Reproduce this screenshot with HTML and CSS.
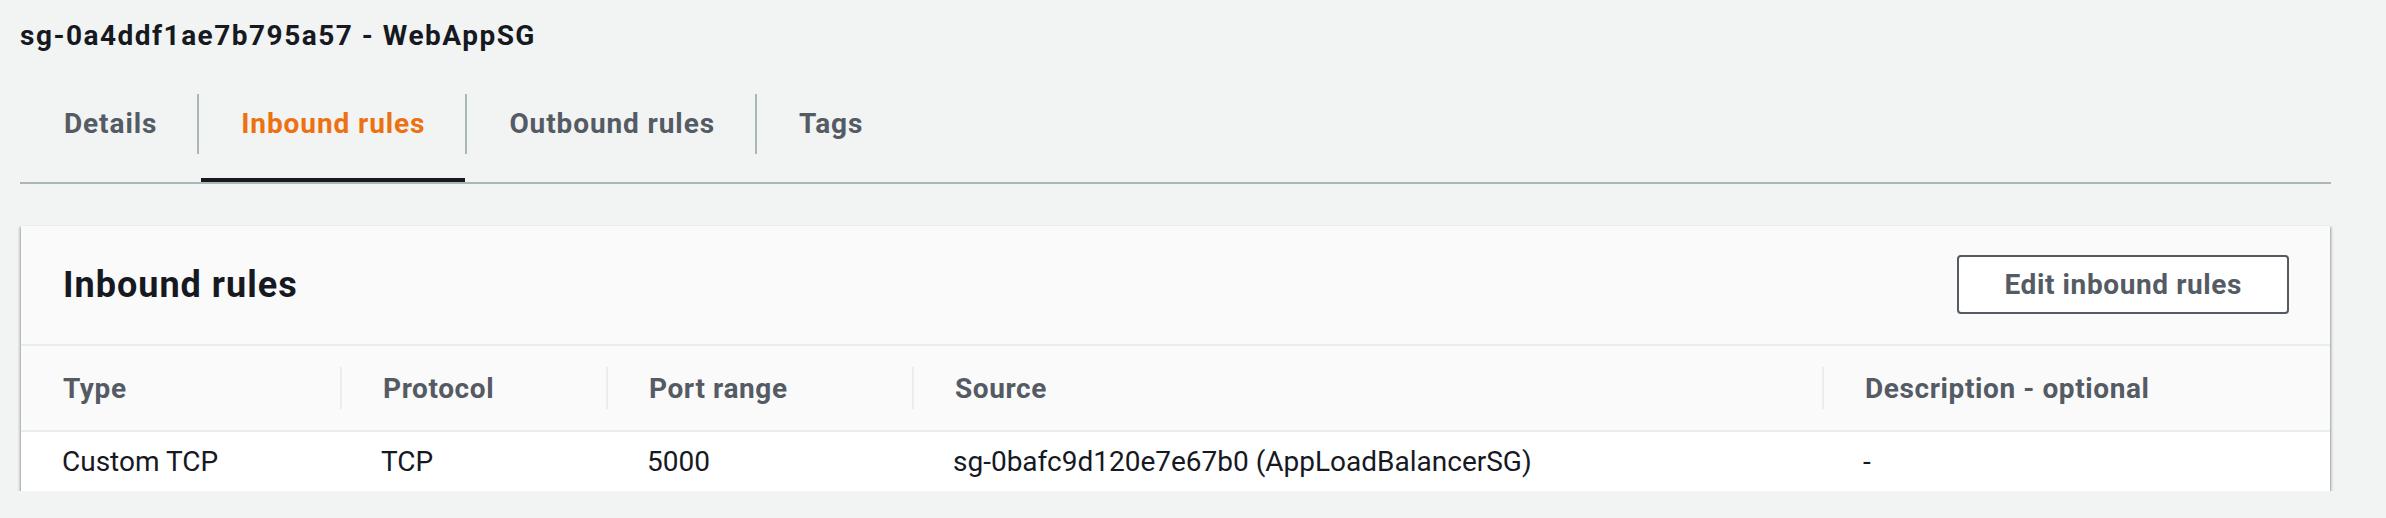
FILE: index.html
```html
<!DOCTYPE html>
<html lang="en">
<head>
<meta charset="utf-8">
<title>sg-0a4ddf1ae7b795a57 - WebAppSG</title>
<link rel="stylesheet" href="styles.css">
</head>
<body>
<div class="page">
  <h1 class="title">sg-0a4ddf1ae7b795a57 - WebAppSG</h1>
  <div class="tabs">
    <div class="tab">Details</div>
    <span class="tab-sep"></span>
    <div class="tab active">Inbound rules</div>
    <span class="tab-sep"></span>
    <div class="tab">Outbound rules</div>
    <span class="tab-sep"></span>
    <div class="tab">Tags</div>
  </div>
  <section class="panel">
    <div class="panel-header">
      <h2 class="panel-title">Inbound rules</h2>
      <button class="btn">Edit inbound rules</button>
    </div>
    <div class="table">
      <div class="th first">Type</div>
      <div class="th"><span class="col-sep"></span><span class="th-text">Protocol</span></div>
      <div class="th"><span class="col-sep"></span><span class="th-text">Port range</span></div>
      <div class="th"><span class="col-sep"></span><span class="th-text">Source</span></div>
      <div class="th"><span class="col-sep"></span><span class="th-text">Description - optional</span></div>
      <div class="td">Custom TCP</div>
      <div class="td">TCP</div>
      <div class="td">5000</div>
      <div class="td">sg-0bafc9d120e7e67b0 (AppLoadBalancerSG)</div>
      <div class="td">-</div>
    </div>
  </section>
</div>
</body>
</html>
```
FILE: styles.css
```css
html, body {
  margin: 0;
  padding: 0;
  background: #f2f3f3;
}

body {
  font-family: Roboto, "Open Sans", "Liberation Sans", sans-serif;
  color: #16191f;
}

.page {
  padding: 0 55px 0 20px;
}

.title {
  margin: 18px 0 0;
  font-size: 28px;
  line-height: 36px;
  font-weight: 700;
  letter-spacing: 1.5px;
  color: #16191f;
}

.tabs {
  display: flex;
  margin-top: 40px;
  padding-left: 4px;
  border-bottom: 2px solid #aab7b8;
}

.tab {
  padding: 0 40px 24px;
  line-height: 60px;
  font-size: 28px;
  font-weight: 700;
  letter-spacing: 0.9px;
  color: #545b64;
  border-bottom: 4px solid transparent;
}

.tab.active {
  color: #ec7211;
  border-bottom-color: #16191f;
}

.tab-sep {
  width: 2px;
  height: 60px;
  margin-right: 2px;
  background: #aab7b8;
  flex: none;
}

.panel {
  margin: 41px 1px 0;
  background: #fafafa;
  border-top: 1px solid #eaeded;
  box-shadow: 0 2px 2px 0 rgba(0, 28, 36, 0.4),
              2px 2px 2px 0 rgba(0, 28, 36, 0.15),
              -2px 2px 2px 0 rgba(0, 28, 36, 0.15);
}

.panel-header {
  display: flex;
  align-items: center;
  justify-content: space-between;
  height: 118px;
  padding: 0 41px 0 42px;
  border-bottom: 2px solid #eaeded;
}

.panel-title {
  margin: 0;
  font-size: 36px;
  line-height: 44px;
  font-weight: 700;
  letter-spacing: 1px;
  color: #16191f;
}

.btn {
  height: 59px;
  padding: 0 45px;
  margin-top: -2px;
  background: #ffffff;
  border: 2px solid #545b64;
  border-radius: 4px;
  font-family: inherit;
  font-size: 28px;
  font-weight: 700;
  letter-spacing: 0.6px;
  color: #545b64;
}

.table {
  display: grid;
  grid-template-columns: 319px 266px 306px 910px 1fr;
}

.th {
  display: flex;
  align-items: center;
  height: 84px;
  border-bottom: 2px solid #eaeded;
  font-size: 28px;
  font-weight: 700;
  letter-spacing: 0.6px;
  color: #545b64;
}

.th.first {
  padding-left: 42px;
}

.col-sep {
  width: 2px;
  height: 42px;
  background: #eaeded;
  flex: none;
}

.th-text {
  margin-left: 41px;
}

.td {
  display: flex;
  align-items: center;
  height: 59px;
  padding-left: 41px;
  background: #ffffff;
  font-size: 28px;
  color: #16191f;
}
```
